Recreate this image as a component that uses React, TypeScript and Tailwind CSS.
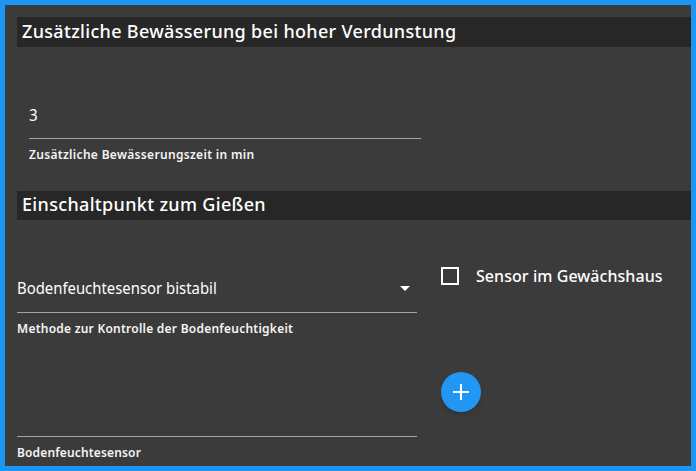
export default function App() {
  return (
    <main className="h-[471px] w-[696px] overflow-hidden border-[5px] border-[#1c96f3] bg-[#3b3b3b] pl-3 pt-3 font-['Noto_Sans',sans-serif] text-white">
      <h2 className="h-[30px] bg-[#272727] pl-[5px] text-[18px] font-medium leading-[28px] tracking-[0.32px]">Zusätzliche Bewässerung bei hoher Verdunstung</h2>
      <section className="h-[144px] pl-3 pt-[57px]">
        <div className="h-[35px] w-[392px] border-b border-[#a5a5a5] text-[16px] leading-[23px]"><span className="inline-block origin-left scale-x-[0.95]">3</span></div>
        <p className="pt-[7px] text-[12px] font-semibold leading-[18px] tracking-[0.32px] text-[#f4f4f4]">Zusätzliche Bewässerungszeit in min</p>
      </section>
      <h2 className="h-[29px] bg-[#272727] pl-[5px] text-[18px] font-medium leading-[26px] tracking-[0.33px]">Einschaltpunkt zum Gießen</h2>
      <section className="flex gap-6">
        <div className="w-[400px] pt-14">
          <div className="flex h-[37px] justify-between border-b border-[#a5a5a5] pr-[7px] text-[16px] leading-[24px]"><span className="inline-block origin-left scale-x-[0.93]">Bodenfeuchtesensor bistabil</span><svg className="mt-[10px]" width="10" height="5"><path d="M0 0h10L5 5z" fill="white" /></svg></div>
          <p className="pt-[7px] text-[12px] font-semibold leading-[18px] tracking-[0.24px] text-[#f4f4f4]">Methode zur Kontrolle der Bodenfeuchtigkeit</p>
          <div className="h-[99px] border-b border-[#a5a5a5]" />
          <p className="pt-[7px] text-[12px] font-semibold leading-[18px] tracking-[0.15px] text-[#f4f4f4]">Bodenfeuchtesensor</p>
        </div>
        <div className="pt-[43px]">
          <label className="flex h-[26px] items-center gap-[17px] text-[16px] font-medium tracking-[0.06px]"><span className="size-[18px] border-2 border-white" />Sensor im Gewächshaus</label>
          <button className="mt-[83px] grid size-10 place-items-center rounded-full bg-[#2196f3] shadow-md"><svg width="24" height="24" viewBox="0 0 24 24" fill="white"><path d="M20 13h-7v7h-2v-7H4v-2h7V4h2v7h7z" /></svg></button>
        </div>
      </section>
    </main>
  );
}
